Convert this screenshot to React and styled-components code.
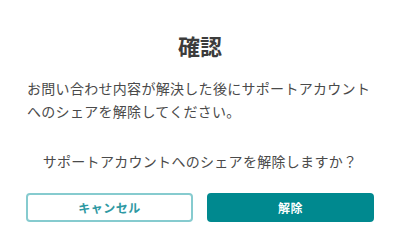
import React from "react";
import styled, { createGlobalStyle } from "styled-components";

const GlobalStyle = createGlobalStyle`
  html, body {
    margin: 0;
    padding: 0;
    background: #ffffff;
  }
  body {
    font-family: "Noto Sans CJK JP", "Noto Sans", sans-serif;
  }
`;

const Dialog = styled.div`
  width: 400px;
  height: 245px;
  box-sizing: border-box;
  padding: 27px 26px 0;
  display: flex;
  flex-direction: column;
  background: #ffffff;
`;

const Title = styled.h2`
  margin: 0;
  font-size: 22px;
  line-height: 36px;
  font-weight: 700;
  text-align: center;
  color: #3c3c3c;
`;

const Message = styled.p`
  margin: 14px 0 0 1px;
  font-size: 14px;
  line-height: 23px;
  letter-spacing: 0.3px;
  color: #4a4a4a;
`;

const Question = styled.p`
  margin: 27px 0 0;
  font-size: 14px;
  line-height: 23px;
  letter-spacing: 0.3px;
  text-align: center;
  color: #4a4a4a;
`;

const Actions = styled.div`
  margin-top: 20px;
  display: grid;
  grid-template-columns: 1fr 1fr;
  gap: 14px;
`;

const Button = styled.button`
  height: 29px;
  box-sizing: border-box;
  border-radius: 4px;
  font-family: inherit;
  font-size: 12px;
  font-weight: 700;
  letter-spacing: 0.5px;
  cursor: pointer;
  border: 2px solid ${(p) => (p.$primary ? "#00898f" : "#86cbcf")};
  background: ${(p) => (p.$primary ? "#00898f" : "#ffffff")};
  color: ${(p) => (p.$primary ? "#ffffff" : "#2e99a3")};
`;

export default function App() {
  return (
    <>
      <GlobalStyle />
      <Dialog>
        <Title>確認</Title>
        <Message>
          お問い合わせ内容が解決した後にサポートアカウント
          <br />
          へのシェアを解除してください。
        </Message>
        <Question>サポートアカウントへのシェアを解除しますか？</Question>
        <Actions>
          <Button>キャンセル</Button>
          <Button $primary>解除</Button>
        </Actions>
      </Dialog>
    </>
  );
}
